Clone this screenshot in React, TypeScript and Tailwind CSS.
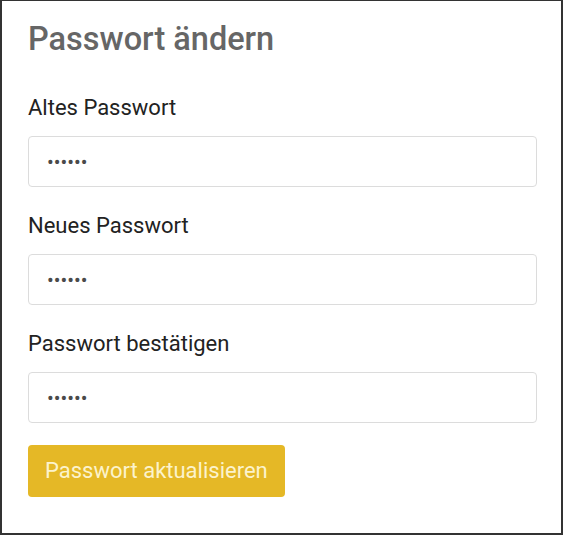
import React from "react";

function Field({ label }: { label: string }) {
  return (
    <div className="flex flex-col">
      <label className="text-[22px] leading-[26px] text-[#222] mb-[15px]">{label}</label>
      <div className="h-[51px] w-full rounded-[4px] border border-[#dcdcdc] bg-white flex items-center px-[18px]">
        <span className="text-[#4a4a4a] text-[20px] leading-none">••••••</span>
      </div>
    </div>
  );
}

export default function App() {
  return (
    <div className="w-[563px] h-[535px] bg-white border-t border-x-2 border-b-2 border-[#333] font-['Roboto',sans-serif] pl-[26px] pr-[24px] pt-[18px]">
      <h1 className="text-[32.5px] leading-[40px] font-medium text-[#666] mb-[36px]">Passwort ändern</h1>
      <div className="flex flex-col gap-[26px]">
        <Field label="Altes Passwort" />
        <Field label="Neues Passwort" />
        <Field label="Passwort bestätigen" />
      </div>
      <button className="mt-[22px] h-[52px] px-[17px] rounded-[4px] bg-[#e5b826] text-[#fcf3cc] text-[22px] leading-none">
        Passwort aktualisieren
      </button>
    </div>
  );
}
